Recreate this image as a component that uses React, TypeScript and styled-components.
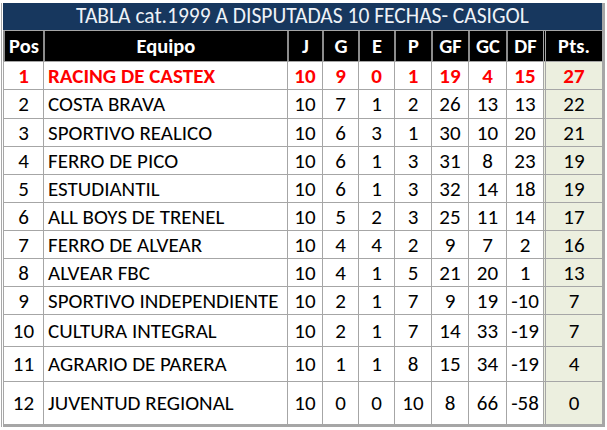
import React from "react";
import styled, { createGlobalStyle } from "styled-components";

const Global = createGlobalStyle`
  html, body { margin: 0; padding: 0; background: #ffffff; }
  body { font-family: Calibri, Carlito, Lato, "Liberation Sans", sans-serif; }
`;

const COLS = "40px 244px 35px 36px 36px 37px 37px 38px 37px 59px";

type Team = { pos: number; name: string; j: number; g: number; e: number; p: number; gf: number; gc: number; df: number; pts: number; h: number };

const teams: Team[] = [
  { pos: 1, name: "RACING DE CASTEX", j: 10, g: 9, e: 0, p: 1, gf: 19, gc: 4, df: 15, pts: 27, h: 28 },
  { pos: 2, name: "COSTA BRAVA", j: 10, g: 7, e: 1, p: 2, gf: 26, gc: 13, df: 13, pts: 22, h: 29 },
  { pos: 3, name: "SPORTIVO REALICO", j: 10, g: 6, e: 3, p: 1, gf: 30, gc: 10, df: 20, pts: 21, h: 28 },
  { pos: 4, name: "FERRO DE PICO", j: 10, g: 6, e: 1, p: 3, gf: 31, gc: 8, df: 23, pts: 19, h: 28 },
  { pos: 5, name: "ESTUDIANTIL", j: 10, g: 6, e: 1, p: 3, gf: 32, gc: 14, df: 18, pts: 19, h: 28 },
  { pos: 6, name: "ALL BOYS DE TRENEL", j: 10, g: 5, e: 2, p: 3, gf: 25, gc: 11, df: 14, pts: 17, h: 28 },
  { pos: 7, name: "FERRO DE ALVEAR", j: 10, g: 4, e: 4, p: 2, gf: 9, gc: 7, df: 2, pts: 16, h: 28 },
  { pos: 8, name: "ALVEAR FBC", j: 10, g: 4, e: 1, p: 5, gf: 21, gc: 20, df: 1, pts: 13, h: 28 },
  { pos: 9, name: "SPORTIVO INDEPENDIENTE", j: 10, g: 2, e: 1, p: 7, gf: 9, gc: 19, df: -10, pts: 7, h: 28 },
  { pos: 10, name: "CULTURA INTEGRAL", j: 10, g: 2, e: 1, p: 7, gf: 14, gc: 33, df: -19, pts: 7, h: 32 },
  { pos: 11, name: "AGRARIO DE PARERA", j: 10, g: 1, e: 1, p: 8, gf: 15, gc: 34, df: -19, pts: 4, h: 35 },
  { pos: 12, name: "JUVENTUD REGIONAL", j: 10, g: 0, e: 0, p: 10, gf: 8, gc: 66, df: -58, pts: 0, h: 43 },
];

const Page = styled.div`
  padding: 3px 0 0 1px;
  width: 607px;
  height: 430px;
  box-sizing: border-box;
`;

const Sheet = styled.div`
  width: 604px;
  border-left: 1px solid #a8a8a8;
  padding-left: 1px;
  box-sizing: border-box;
`;

const Frame = styled.div`
  width: 602px;
  border-right: 3px solid #a6a6a6;
  border-bottom: 3px solid #a6a6a6;
  box-sizing: border-box;
`;

const Title = styled.div`
  height: 28px;
  background: #17375e;
  color: #eef2f7;
  font-size: 21.5px;
  line-height: 27px;
  text-align: center;
  border-bottom: 1px solid #a6a6a6;
  box-sizing: border-box;
  white-space: nowrap;
`;

const Row = styled.div<{ $h: number }>`
  display: grid;
  grid-template-columns: ${COLS};
  height: ${(p) => p.$h}px;
`;

const HeadCell = styled.div<{ $pts?: boolean }>`
  display: flex;
  align-items: center;
  justify-content: center;
  background: #000000;
  color: #ffffff;
  font-weight: 700;
  font-size: 20.5px;
  border-left: ${(p) => (p.$pts ? "3px double #a6a6a6" : "2px solid #8c8c8c")};
  box-sizing: border-box;
  white-space: nowrap;
`;

const Cell = styled.div<{ $left?: boolean; $pts?: boolean; $lead?: boolean }>`
  display: flex;
  align-items: center;
  justify-content: ${(p) => (p.$left ? "flex-start" : "center")};
  padding-left: ${(p) => (p.$left ? "4px" : "0")};
  background: ${(p) => (p.$pts ? "#ecefdf" : "#ffffff")};
  color: ${(p) => (p.$lead ? "#ff0000" : "#000000")};
  font-weight: ${(p) => (p.$lead ? 700 : 400)};
  font-size: 21px;
  border-left: ${(p) => (p.$pts ? "3px double #a6a6a6" : "1px solid #a6a6a6")};
  border-top: 1px solid #a6a6a6;
  box-sizing: border-box;
  white-space: nowrap;
`;

const heads = ["Pos", "Equipo", "J", "G", "E", "P", "GF", "GC", "DF", "Pts."];

export default function App() {
  return (
    <Page>
      <Global />
      <Sheet>
        <Frame>
          <Title>TABLA cat.1999 A DISPUTADAS 10 FECHAS- CASIGOL</Title>
          <Row $h={30}>
            {heads.map((h) => (
              <HeadCell key={h} $pts={h === "Pts."}>{h}</HeadCell>
            ))}
          </Row>
          {teams.map((t) => {
            const lead = t.pos === 1;
            return (
              <Row key={t.pos} $h={t.h}>
                <Cell $lead={lead}>{t.pos}</Cell>
                <Cell $left $lead={lead}>{t.name}</Cell>
                <Cell $lead={lead}>{t.j}</Cell>
                <Cell $lead={lead}>{t.g}</Cell>
                <Cell $lead={lead}>{t.e}</Cell>
                <Cell $lead={lead}>{t.p}</Cell>
                <Cell $lead={lead}>{t.gf}</Cell>
                <Cell $lead={lead}>{t.gc}</Cell>
                <Cell $lead={lead}>{t.df}</Cell>
                <Cell $lead={lead} $pts>{t.pts}</Cell>
              </Row>
            );
          })}
        </Frame>
      </Sheet>
    </Page>
  );
}
